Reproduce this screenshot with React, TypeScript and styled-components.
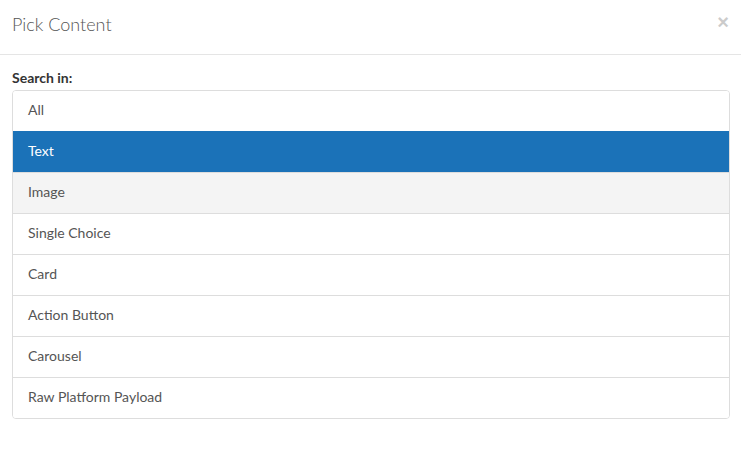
import React from "react";
import styled, { createGlobalStyle } from "styled-components";

const Global = createGlobalStyle`
  html, body { margin: 0; padding: 0; background: #fff; }
  body { font-family: Lato, "Open Sans", "Liberation Sans", sans-serif; color: #333; }
  * { box-sizing: border-box; }
`;

const Modal = styled.div`
  width: 741px;
  height: 450px;
  background: #fff;
  display: flex;
  flex-direction: column;
`;

const Header = styled.div`
  height: 55px;
  border-bottom: 1px solid #e5e5e5;
  display: flex;
  align-items: center;
  justify-content: space-between;
  padding: 0 12px 0 12px;
`;

const Title = styled.h4`
  margin: 0;
  font-size: 18px;
  font-weight: 300;
  color: #555;
  line-height: 20px;
  margin-top: -6px;
`;

const Close = styled.button`
  border: 0;
  background: transparent;
  padding: 0;
  font-family: "Liberation Sans", Arial, sans-serif;
  font-size: 20px;
  font-weight: bold;
  line-height: 1;
  color: #000;
  opacity: 0.2;
  cursor: pointer;
  margin-top: -11px;
`;

const Body = styled.div`
  padding: 14px 11px 12px 12px;
  display: flex;
  flex-direction: column;
`;

const Label = styled.label`
  font-size: 14px;
  font-weight: 700;
  line-height: 18px;
  color: #333;
  margin-bottom: 3px;
`;

const List = styled.div`
  display: flex;
  flex-direction: column;
  border: 1px solid #ddd;
  border-radius: 4px;
  overflow: hidden;
`;

const Item = styled.div<{ $active?: boolean; $hover?: boolean }>`
  height: 41px;
  display: flex;
  align-items: center;
  padding: 0 15px 4px;
  font-size: 14px;
  color: ${(p) => (p.$active ? "#fff" : "#555")};
  background: ${(p) => (p.$active ? "#1b72b8" : p.$hover ? "#f4f4f4" : "#fff")};
  border-top: 1px solid ${(p) => (p.$active ? "#1b72b8" : "#ddd")};
  &:first-child { border-top: 0; height: 40px; }
`;

const items = [
  "All",
  "Text",
  "Image",
  "Single Choice",
  "Card",
  "Action Button",
  "Carousel",
  "Raw Platform Payload",
];

export default function App() {
  return (
    <>
      <Global />
      <Modal>
        <Header>
          <Title>Pick Content</Title>
          <Close aria-label="Close">×</Close>
        </Header>
        <Body>
          <Label>Search in:</Label>
          <List>
            {items.map((t) => (
              <Item key={t} $active={t === "Text"} $hover={t === "Image"}>
                {t}
              </Item>
            ))}
          </List>
        </Body>
      </Modal>
    </>
  );
}
